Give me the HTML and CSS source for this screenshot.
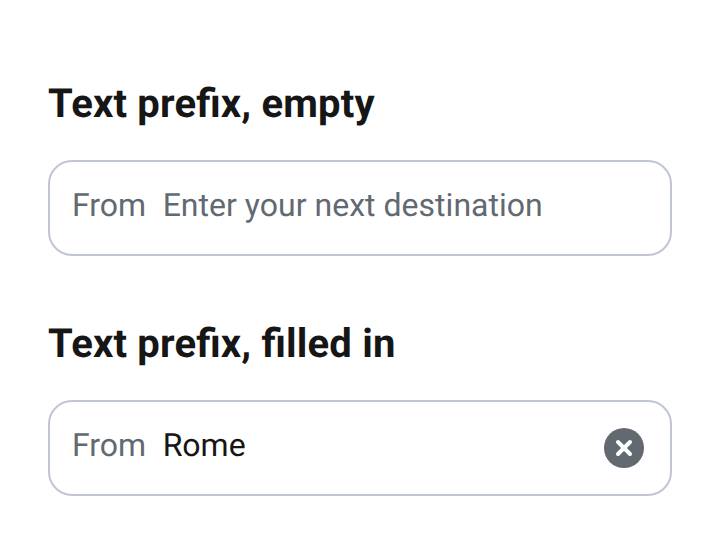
FILE: index.html
```html
<!DOCTYPE html>
<html lang="en">
<head>
<meta charset="utf-8">
<title>Text prefix</title>
<link rel="stylesheet" href="styles.css">
</head>
<body>
<main class="page">
  <section class="example">
    <h2 class="heading">Text prefix, empty</h2>
    <div class="field">
      <span class="prefix">From</span>
      <span class="value placeholder">Enter your next destination</span>
    </div>
  </section>
  <section class="example">
    <h2 class="heading">Text prefix, filled in</h2>
    <div class="field">
      <span class="prefix">From</span>
      <span class="value">Rome</span>
      <button class="clear" type="button" aria-label="Clear">
        <svg width="40" height="40" viewBox="0 0 40 40"><circle cx="20" cy="20" r="20" fill="#626971"/><path d="M14 14 26 26M26 14 14 26" stroke="#fff" stroke-width="4" stroke-linecap="round"/></svg>
      </button>
    </div>
  </section>
</main>
</body>
</html>
```
FILE: styles.css
```css
* {
  box-sizing: border-box;
}

body {
  margin: 0;
  background: #fff;
  color: #161616;
  font-family: Roboto, sans-serif;
  text-rendering: geometricPrecision;
}

.page {
  display: flex;
  flex-direction: column;
  gap: 64px;
  padding: 80px 48px 48px;
}

.example {
  display: flex;
  flex-direction: column;
  gap: 32px;
}

.heading {
  margin: 0;
  font-size: 40px;
  line-height: 48px;
  font-weight: 700;
  letter-spacing: 0.18px;
  font-feature-settings: "liga" 1;
}

.field {
  display: flex;
  align-items: center;
  height: 96px;
  padding: 0 26px 0 22px;
  border: 2px solid #c0c6d1;
  border-radius: 24px;
  font-size: 32px;
  line-height: 40px;
}

.prefix {
  margin-right: 16.5px;
  padding-bottom: 6px;
  color: #626971;
}

.value {
  flex: 1;
  padding-bottom: 6px;
}

.placeholder {
  color: #626971;
  letter-spacing: 0.02px;
}

.clear {
  display: flex;
  padding: 0;
  border: 0;
  background: none;
}
```
